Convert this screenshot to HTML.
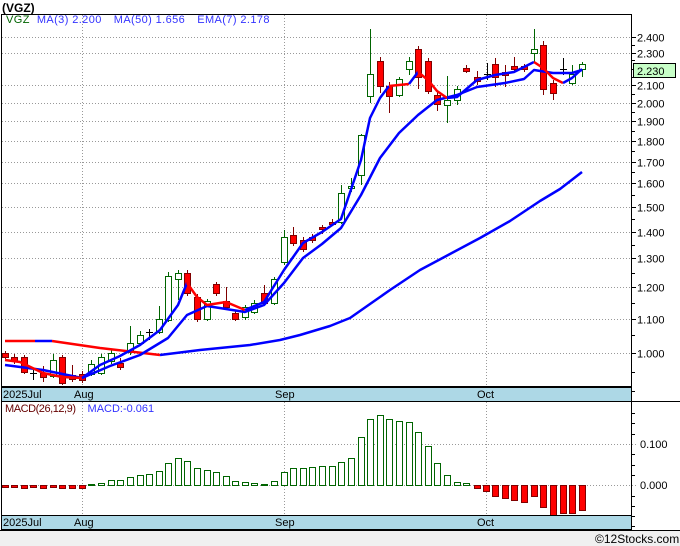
<!DOCTYPE html>
<html><head><meta charset="utf-8"><style>
html,body{margin:0;padding:0;background:#f0f0f0;width:680px;height:546px;overflow:hidden;font-family:"Liberation Sans",sans-serif}
svg{display:block}
</style></head><body>
<svg id="s" width="680" height="546" xmlns="http://www.w3.org/2000/svg" font-family="Liberation Sans, sans-serif" font-size="11">
<rect x="0" y="0" width="680" height="530" fill="#fff"/>
<rect x="0" y="530" width="680" height="16" fill="#f0f0f0"/>
<text x="2" y="12" font-weight="bold" font-size="12" fill="#000">(VGZ)</text>
<g id="grid" stroke="#999" stroke-dasharray="1,2" stroke-width="1"></g>
<g id="mac"></g>
<g id="cand"></g>
<g id="lines" fill="none" stroke-width="2.5" stroke-linejoin="round"></g>
<rect x="1.5" y="14.5" width="630" height="372" fill="none" stroke="#000"/>
<rect x="1.5" y="387.5" width="630" height="14" fill="#add8e6" stroke="#000"/>
<rect x="1.5" y="401.5" width="630" height="114" fill="none" stroke="#000"/>
<rect x="1.5" y="515.5" width="630" height="14" fill="#add8e6" stroke="#000"/>
<line x1="631.5" y1="14" x2="631.5" y2="530" stroke="#000"/>
<line x1="631" y1="401.5" x2="680" y2="401.5" stroke="#000"/>
<line x1="0" y1="530.5" x2="680" y2="530.5" stroke="#000"/>
<g fill="#000" font-size="11">
<text x="3" y="398">2025Jul</text><text x="74" y="398">Aug</text><text x="275" y="398">Sep</text><text x="477" y="398">Oct</text>
<text x="3" y="526">2025Jul</text><text x="74" y="526">Aug</text><text x="275" y="526">Sep</text><text x="477" y="526">Oct</text>
</g>
<text x="6" y="23" font-size="11" letter-spacing="0.4"><tspan fill="#006400">VGZ</tspan><tspan fill="#3333ff" dx="7">MA(3)  2.200</tspan><tspan fill="#3333ff" dx="12">MA(50)  1.656</tspan><tspan fill="#3333ff" dx="12">EMA(7)  2.178</tspan></text>
<text x="5" y="412" font-size="11"><tspan fill="#600" textLength="71">MACD(26,12,9)</tspan><tspan fill="#3333ff" dx="12">MACD:-0.061</tspan></text>
<g id="ax" font-size="11" fill="#000"></g>
<rect x="633.5" y="63.5" width="42" height="14" fill="#c8ffc8" stroke="#000"/>
<text x="637" y="75" fill="#000">2.230</text>
<text x="595" y="543" fill="#000" font-size="12">©12Stocks.com</text>
</svg>
<script>
const NS="http://www.w3.org/2000/svg";
function el(p,t,a,txt){const e=document.createElementNS(NS,t);for(const k in a)e.setAttribute(k,a[k]);if(txt)e.textContent=txt;document.getElementById(p).appendChild(e);return e;}
const Y=p=>353-360.7*Math.log(p);
[2.4,2.3,2.2,2.1,2.0,1.9,1.8,1.7,1.6,1.5,1.4,1.3,1.2,1.1,1.0].forEach(p=>{const y=Math.round(Y(p))+.5;
 if(p!=2.2){el('grid','line',{x1:2,y1:y,x2:636,y2:y});el('ax','text',{x:637,y:y+4},p.toFixed(3));}
 el('ax','line',{x1:631,y1:y,x2:636,y2:y,stroke:'#000'});
 const y2=Math.round(Y(p-0.05))+.5; if(p>1.0) el('ax','line',{x1:631,y1:y2,x2:635,y2:y2,stroke:'#000'});
});
[1.0,0.95,0.9].forEach(p=>{const y=Math.round(Y(p))+.5;el('ax','line',{x1:631,y1:y,x2:635,y2:y,stroke:'#000'});});
[82,284,486].forEach(x=>{el('grid','line',{x1:x+.5,y1:15,x2:x+.5,y2:387});el('grid','line',{x1:x+.5,y1:402,x2:x+.5,y2:515});});
[444.5,485.5].forEach(y=>el('grid','line',{x1:2,y1:y,x2:636,y2:y}));
el('ax','text',{x:640,y:448},'0.100');el('ax','text',{x:640,y:489},'0.000');
[413,423,434,454,465,475,496,506,516,526].forEach(y=>el('ax','line',{x1:631,y1:y+.5,x2:635,y2:y+.5,stroke:'#000'}));
const C=[[5,353,357,351,359,'r'],[14,357,361,354,364,'r'],[24,357,372,355,374,'r'],[33,373,373,370,380,'k'],[43,373,377,366,382,'r'],
[53,360,376,354,378,'g'],[62,357,383,355,385,'r'],[72,375,379,365,382,'r'],[82,374,380,371,383,'r'],[91,364,374,360,376,'g'],
[101,357,373,354,375,'g'],[111,353,361,350,364,'g'],[120,363,367,358,370,'r'],[130,343,352,326,355,'g'],[140,335,343,331,346,'g'],
[149,332,332,329,340,'k'],[159,319,332,306,334,'g'],[168,276,320,272,322,'g'],[178,273,279,270,300,'g'],[187,273,293,270,296,'r'],
[197,297,319,294,322,'r'],[207,301,319,299,321,'g'],[216,284,293,282,296,'r'],[226,301,307,287,310,'r'],[235,313,319,311,321,'r'],
[245,307,317,305,320,'g'],[254,303,312,300,314,'g'],[264,293,303,285,305,'r'],[274,279,303,277,305,'g'],[284,237,262,230,265,'g'],
[293,235,243,227,246,'r'],[303,240,249,237,252,'r'],[312,237,240,234,243,'r'],[322,227,229,225,234,'r'],[332,222,224,219,226,'r'],
[341,193,222,185,224,'g'],[351,186,188,178,192,'g'],[361,135,175,134,185,'g'],[370,74,96,29,103,'g'],[380,61,86,57,93,'r'],
[389,86,96,82,113,'r'],[399,79,95,77,97,'g'],[409,61,69,57,75,'g'],[418,49,77,46,89,'r'],[428,61,91,58,94,'r'],
[437,95,104,92,111,'r'],[447,100,105,76,123,'g'],[457,89,100,86,105,'g'],[466,68,71,65,73,'r'],[477,77,81,71,85,'r'],
[487,74,74,63,80,'k'],[495,64,77,58,87,'r'],[505,72,75,65,87,'r'],[514,66,69,57,72,'r'],[524,66,69,64,72,'r'],
[534,49,53,29,63,'g'],[543,45,89,41,95,'r'],[553,83,93,80,100,'r'],[563,69,69,58,75,'k'],[572,74,83,65,85,'g'],[582,64,69,62,77,'g']];
C.forEach(([x,t,b,h,l,c])=>{
 const sc=c=='g'?'#006400':c=='r'?'#800000':'#000';
 el('cand','line',{x1:x+.5,y1:h,x2:x+.5,y2:l,stroke:sc});
 if(c=='k'){el('cand','line',{x1:x-3,y1:t+.5,x2:x+4,y2:t+.5,stroke:'#000'});}
 else el('cand','rect',{x:x-2.5,y:t+.5,width:6,height:Math.max(b-t,2),fill:c=='r'?'#f00':'#fff',stroke:sc});
});
function pl(pts,col){el('lines','polyline',{points:pts.map(p=>p.join(',')).join(' '),stroke:col});}
pl([[5,341],[35,341]],'#f00');pl([[35,341],[52,341]],'#00f');pl([[52,341],[100,348],[160,355]],'#f00');
pl([[160,355],[200,350],[250,345],[280,340],[300,335],[330,326],[350,318],[370,304],[390,290],[420,270],[450,254],[480,238],[510,221],[540,201],[560,189],[582,172]],'#00f');
pl([[5,365],[43,370],[82,378],[110,366],[140,355],[168,338],[187,315],[207,306],[245,312],[264,305],[284,283],[303,258],[322,244],[341,228],[361,195],[380,158],[399,133],[418,115],[437,100],[457,95],[477,87],[505,83],[524,79],[534,70],[553,73],[572,73],[582,70]],'#00f');
pl([[5,360],[20,362],[43,373],[62,377],[82,378]],'#f00');
pl([[82,378],[100,365],[120,356],[140,345],[160,330],[178,305],[187,283]],'#00f');
pl([[187,283],[197,297],[207,305],[226,302],[245,310]],'#f00');
pl([[245,310],[264,302],[284,270],[303,243],[322,232],[341,219],[361,160],[370,118],[380,98],[389,86]],'#00f');
pl([[389,86],[409,84]],'#f00');pl([[409,84],[418,72]],'#00f');pl([[418,72],[428,80],[437,91],[447,98]],'#f00');
pl([[447,98],[457,97],[477,80],[495,75],[514,72],[534,62]],'#00f');pl([[534,62],[543,68],[553,78],[563,83]],'#f00');pl([[563,83],[572,78],[582,69]],'#00f');
const Z=485;
const M=[[5,487],[14,487],[24,488],[33,487],[43,488],[53,487],[62,488],[72,488],[82,488],[91,484],[101,483],[111,480],[120,480],[130,477],[140,475],[149,474],[159,471],[168,463],[178,458],[187,461],[197,468],[207,470],[216,472],[226,476],[235,481],[245,482],[254,483],[264,484],[274,481],[284,472],[293,468],
[303,468],[312,467],[322,466],[332,466],[341,462],[351,458],[361,437],[370,419],[380,415],[389,419],[399,421],[409,422],[418,432],[428,446],[437,463],[447,475],[457,482],[466,483],[477,488],[486,491],[495,496],[505,498],[514,500],[524,502],[534,496],[543,507],[553,515],[563,513],[572,513],[582,510]];
M.forEach(([x,v])=>{const neg=v>Z;const t=neg?Z:v,h=Math.abs(v-Z);
 el('mac','rect',{x:x-2.5,y:t+.5,width:6,height:Math.max(h,1),fill:neg?'#f00':'#fff',stroke:neg?'#800000':'#006400'});});
</script>
</body></html>
